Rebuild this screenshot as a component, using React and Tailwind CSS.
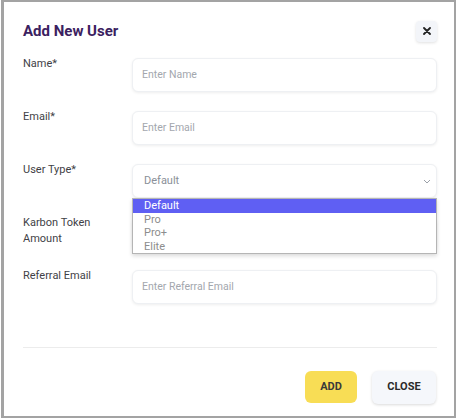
import React from "react";

function Row({ label, children }) {
  return (
    <div className="flex items-start">
      <div className="w-[109px] shrink-0 text-[11px] leading-4 text-[#3f3f46] pt-[1px]">{label}</div>
      <div className="flex-1 mt-[3px] relative">{children}</div>
    </div>
  );
}

function Input({ placeholder }) {
  return (
    <div className="h-[34px] rounded-md border border-[#eef0f3] bg-white shadow-[0_1px_3px_rgba(0,0,0,0.07)] flex items-center pl-[9px] text-[10.5px] text-[#a3a7ae]">
      {placeholder}
    </div>
  );
}

export default function App() {
  return (
    <div className="w-[457px] h-[420px] bg-white" style={{ fontFamily: "Roboto, 'Liberation Sans', sans-serif" }}>
      <div className="ml-[1px] w-[455px] h-[418px] border-l-[3px] border-t-2 border-r-2 border-b-2 border-[#a3a3a3] bg-white pl-[19px] pr-[17px] flex flex-col">
        <div className="flex items-center justify-between pt-[18px]">
          <div className="text-[15px] leading-[21px] font-bold text-[#3b2160] pt-[1px]">
            Add New User
          </div>
          <div className="w-[21px] h-[21px] rounded-[4px] bg-[#f3f5f9] shadow-[0_1px_3px_rgba(0,0,0,0.12)] flex items-center justify-center">
            <svg width="8" height="8" viewBox="0 0 8 8">
              <path d="M1 1L7 7M7 1L1 7" stroke="#222" strokeWidth="1.8" strokeLinecap="round" />
            </svg>
          </div>
        </div>
        <div className="flex flex-col gap-[16px] mt-[13px]">
          <Row label="Name*">
            <Input placeholder="Enter Name" />
          </Row>
          <Row label="Email*">
            <Input placeholder="Enter Email" />
          </Row>
          <Row label="User Type*">
            <div className="h-[34px] rounded-md border border-[#eef0f3] bg-white shadow-[0_1px_3px_rgba(0,0,0,0.07)] flex items-center justify-between pl-[11px] pr-[5px] text-[11px] text-[#8a8f98]">
              <span>Default</span>
              <svg width="8" height="5" viewBox="0 0 8 5">
                <path d="M1 1L4 4L7 1" stroke="#9aa0a8" strokeWidth="1" fill="none" />
              </svg>
            </div>
            <div className="absolute left-0 right-0 top-[34px] z-10 bg-white border border-[#b5b5b5] shadow-[0_2px_4px_rgba(0,0,0,0.15)] text-[11px] leading-[13.5px]">
              <div className="bg-[#5f5ff3] text-white pl-[11px]">Default</div>
              <div className="text-[#8d8d8d] pl-[11px]">Pro</div>
              <div className="text-[#8d8d8d] pl-[11px]">Pro+</div>
              <div className="text-[#8d8d8d] pl-[11px]">Elite</div>
            </div>
          </Row>
          <Row label={<>Karbon Token<br />Amount</>}>
            <Input placeholder="" />
          </Row>
          <Row label="Referral Email">
            <Input placeholder="Enter Referral Email" />
          </Row>
        </div>
        <div className="mt-[43px] border-t border-[#ececec]" />
        <div className="flex justify-end gap-[15px] pt-[23px] pr-[1px]">
          <div className="w-[52px] h-[32px] rounded-md bg-[#f8dd55] flex items-center justify-center text-[11px] font-bold text-[#3a3a3a]">
            ADD
          </div>
          <div className="w-[64px] h-[33px] rounded-md bg-[#f5f7fb] shadow-[0_1px_3px_rgba(0,0,0,0.15)] flex items-center justify-center text-[11px] font-bold text-[#2a2a2a]">
            CLOSE
          </div>
        </div>
      </div>
    </div>
  );
}
